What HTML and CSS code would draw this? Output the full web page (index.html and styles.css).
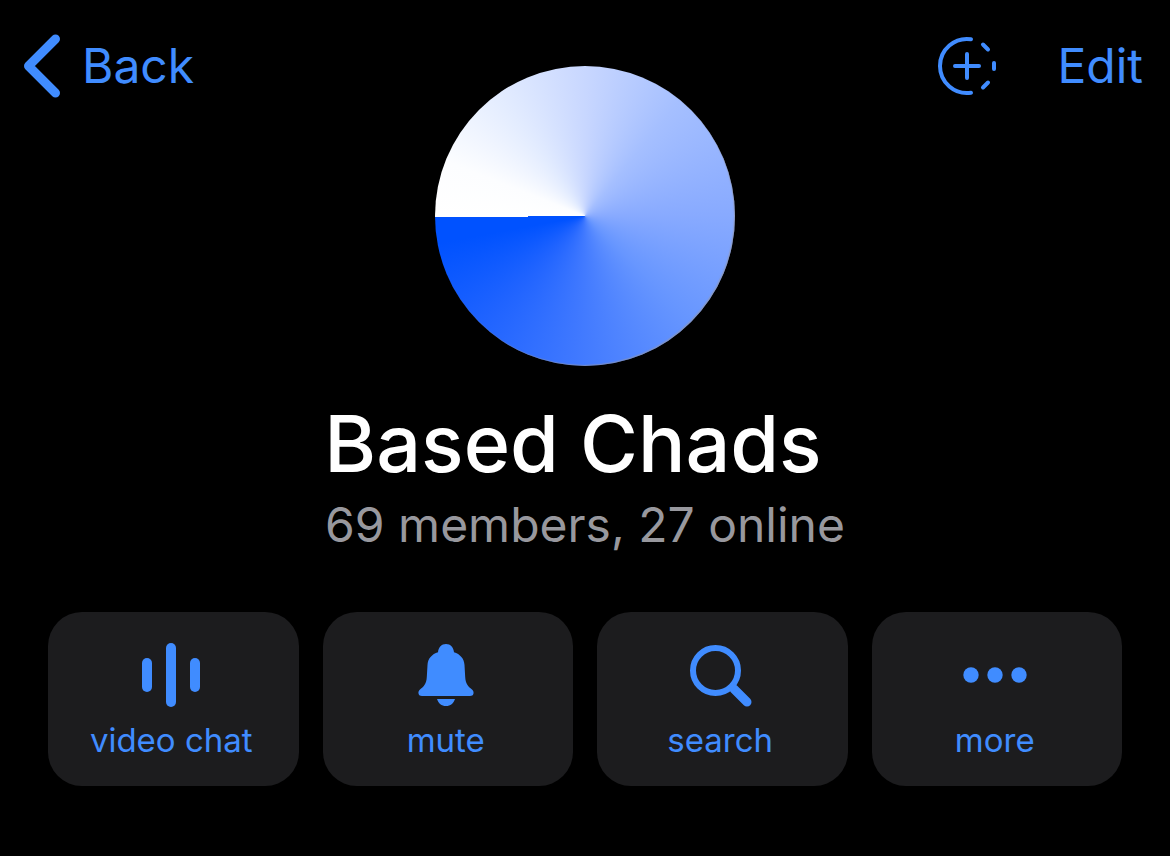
FILE: index.html
```html
<!DOCTYPE html>
<html lang="en">
<head>
<meta charset="utf-8">
<meta name="viewport" content="width=device-width, initial-scale=1">
<title>Based Chads</title>
<link rel="stylesheet" href="styles.css">
</head>
<body>
<main class="profile">
  <header class="topbar">
    <a class="nav-link back" href="#">
      <svg class="chevron" viewBox="2 0 38 68" aria-hidden="true"><path d="M33.500 7 6.500 34 33.500 61" fill="none" stroke="currentColor" stroke-width="9" stroke-linecap="round" stroke-linejoin="round"/></svg>
      <span>Back</span>
    </a>
    <div class="avatar" role="img" aria-label="Group photo"></div>
    <div class="nav-actions">
      <button class="icon-button" type="button" aria-label="Add story">
        <svg class="story-icon" viewBox="0 0 64 64" aria-hidden="true"><g fill="none" stroke="currentColor" stroke-width="4" stroke-linecap="round"><path d="M36 5.3A27 27 0 1 0 36 58.700M32 20V44M20 32H44M48 10.500L53 15.500M59 29V35M48 53.500L53 48.500"/></g></svg>
      </button>
      <button class="nav-link" type="button">Edit</button>
    </div>
  </header>
  <section class="identity">
    <h1 class="name">Based Chads</h1>
    <p class="status">69 members, 27 online</p>
  </section>
  <nav class="actions" aria-label="Group actions">
    <button class="action" type="button">
      <svg class="action-icon" viewBox="0 0 72 72" aria-hidden="true"><g fill="currentColor"><rect x="5" y="19" width="10" height="34" rx="5"/><rect x="29" y="4" width="10" height="64" rx="5"/><rect x="53" y="19" width="10" height="34" rx="5"/></g></svg>
      <span>video chat</span>
    </button>
    <button class="action" type="button">
      <svg class="action-icon" viewBox="0 0 72 72" aria-hidden="true"><path fill="currentColor" d="M34 5C38.500 5 41.600 8.500 42 13.200C48 15 52.200 19.500 52.500 26L53.200 38C53.500 44.500 56 47.500 60 50.500C61.500 52 61.700 53 61.500 54.500C61 56.300 60 57 58 57H10C8 57 7 56.300 6.500 54.500C6.300 53 6.500 52 8 50.500C12 47.500 14.500 44.500 14.800 38L15.500 26C15.800 19.500 20 15 26 13.200C26.400 8.500 29.500 5 34 5ZM25 60H43C41.500 64.500 38.500 67 34 67S26.500 64.500 25 60Z"/></svg>
      <span>mute</span>
    </button>
    <button class="action" type="button">
      <svg class="action-icon" viewBox="0 0 72 72" aria-hidden="true"><g fill="none" stroke="currentColor"><circle cx="29.500" cy="31.500" r="22.500" stroke-width="6"/><path d="M48 50 61 63" stroke-width="9" stroke-linecap="round"/></g></svg>
      <span>search</span>
    </button>
    <button class="action" type="button">
      <svg class="action-icon" viewBox="0 0 72 72" aria-hidden="true"><g fill="currentColor"><circle cx="10" cy="36" r="7.700"/><circle cx="34" cy="36" r="7.700"/><circle cx="58" cy="36" r="7.700"/></g></svg>
      <span>more</span>
    </button>
  </nav>
</main>
</body>
</html>
```
FILE: styles.css
```css
* {
  box-sizing: border-box;
}

body {
  margin: 0;
  background: #000;
  color: #fff;
  font-family: Inter, "Liberation Sans", sans-serif;
}

button {
  padding: 0;
  border: 0;
  background: none;
  color: inherit;
  font: inherit;
  cursor: pointer;
}

.topbar {
  display: grid;
  grid-template-columns: 1fr auto 1fr;
  align-items: start;
  padding: 32px 24px 0;
  color: #408cff;
}

.nav-link {
  display: flex;
  align-items: center;
  gap: 20px;
  height: 68px;
  color: inherit;
  font-size: 48px;
  line-height: 68px;
  text-decoration: none;
}

.back {
  justify-self: start;
}

.chevron {
  width: 38px;
  height: 68px;
}

.avatar {
  width: 300px;
  height: 300px;
  margin-top: 34px;
  border-radius: 50%;
  background: conic-gradient(from 269.5deg, #fff 0deg, #fcfdff 22deg, #e3ecff 55deg, #c7d6ff 92deg, #a5bfff 130deg, #88aaff 180deg, #6796ff 225deg, #3f78ff 275deg, #1f63ff 315deg, #0052ff 350deg, #0052ff 360deg);
  box-shadow: inset -1px -1px 1px rgba(150, 150, 160, 0.6);
}

.nav-actions {
  display: flex;
  justify-content: flex-end;
  align-items: center;
  gap: 58px;
  padding-right: 3px;
}

.icon-button {
  display: flex;
}

.story-icon {
  width: 64px;
  height: 64px;
}

.identity {
  padding: 31px 24px 0;
  text-align: center;
}

.name {
  margin: 0;
  padding-right: 24px;
  font-size: 79px;
  font-weight: 500;
  line-height: 92px;
}

.status {
  margin: 0;
  color: #98989e;
  font-size: 48px;
  line-height: 72px;
}

.actions {
  display: grid;
  grid-template-columns: repeat(4, 1fr);
  gap: 24px;
  padding: 51px 48px;
}

.action {
  display: flex;
  flex-direction: column;
  align-items: center;
  gap: 4px;
  padding: 27px 0 21px;
  border-radius: 34px;
  background: #1c1c1e;
  color: #408cff;
  font-size: 33px;
  line-height: 50px;
}

.action-icon {
  width: 72px;
  height: 72px;
}

.action span {
  padding-right: 4px;
}
```
